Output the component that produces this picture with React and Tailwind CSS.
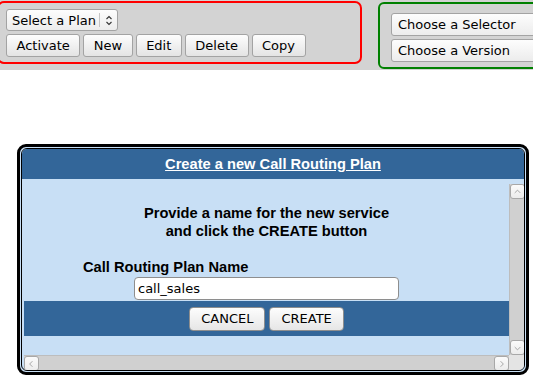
import React from "react";

const sysFont = { fontFamily: '"DejaVu Sans", sans-serif' };
const arialFont = { fontFamily: '"Liberation Sans", Arial, sans-serif' };

const ToolButton = ({ children }) => (
  <button
    className="h-[23px] px-[9.5px] rounded-[3px] border border-[#a3a3a3] bg-gradient-to-b from-[#fdfdfd] to-[#e4e4e4] text-[13px] text-black leading-none"
    style={sysFont}
  >
    {children}
  </button>
);

const UpDown = () => (
  <svg width="8" height="11" viewBox="0 0 8 11" fill="none" stroke="#333" strokeWidth="1.1">
    <path d="M1.5 4 L4 1.5 L6.5 4" />
    <path d="M1.5 7 L4 9.5 L6.5 7" />
  </svg>
);

const PlanSelect = () => (
  <div
    className="flex items-center h-[22px] w-[112px] rounded-[3px] border border-[#a3a3a3] bg-gradient-to-b from-[#fdfdfd] to-[#ececec] text-[13px] text-black"
    style={sysFont}
  >
    <span className="pl-[5px] pr-[3px] leading-none">Select a Plan</span>
    <span className="h-[14px] border-l border-[#c4c4c4]" />
    <span className="flex-1 flex justify-center">
      <UpDown />
    </span>
  </div>
);

const WideSelect = ({ label }) => (
  <div
    className="flex items-center h-[23px] w-[170px] rounded-[3px] border border-[#a3a3a3] bg-gradient-to-b from-[#fdfdfd] to-[#ececec] text-[13px] text-black pl-[6px]"
    style={sysFont}
  >
    {label}
  </div>
);

// little arrow button of the scrollbars
const ScrollBtn = ({ dir }) => {
  const paths = {
    up: "M4 8 L7 5 L10 8",
    down: "M4 6 L7 9 L10 6",
    left: "M8 4 L5 7 L8 10",
    right: "M6 4 L9 7 L6 10",
  };
  return (
    <div className="w-[15px] h-[15px] shrink-0 rounded-[3px] border border-[#a8a8a8] bg-gradient-to-b from-[#fbfbfb] to-[#ececec] flex items-center justify-center">
      <svg width="14" height="14" viewBox="0 0 14 14" fill="none" stroke="#a0a0a0" strokeWidth="1">
        <path d={paths[dir]} />
      </svg>
    </div>
  );
};

const DialogButton = ({ children }) => (
  <button
    className="h-[24px] px-[11px] rounded-[4px] border border-[#8e8e8e] bg-gradient-to-b from-[#fdfdfd] to-[#e6e6e6] text-[13px] text-black leading-none"
    style={sysFont}
  >
    {children}
  </button>
);

export default function App() {
  return (
    <div className="w-[533px] h-[380px] overflow-hidden bg-white">
      <div className="flex items-start h-[70px] bg-[#d3d3d3]">
        <div className="shrink-0 ml-[-3px] mt-px w-[365px] h-[63px] border-2 border-[#ff0000] rounded-[7px] pl-[7px] pt-[6px] flex flex-col gap-[3px]">
          <PlanSelect />
          <div className="flex gap-[3px]">
            <ToolButton>Activate</ToolButton>
            <ToolButton>New</ToolButton>
            <ToolButton>Edit</ToolButton>
            <ToolButton>Delete</ToolButton>
            <ToolButton>Copy</ToolButton>
          </div>
        </div>
        <div className="ml-[16px] mt-[2px] w-[180px] shrink-0 h-[67px] border-2 border-[#008000] rounded-[6px] pl-[11px] pt-[9px] flex flex-col gap-[3px]">
          <WideSelect label="Choose a Selector" />
          <WideSelect label="Choose a Version" />
        </div>
      </div>

      <div className="ml-[17px] mt-[74px] w-[512px] border-[3px] border-black rounded-[9px] bg-[#c8dff5] p-px">
        <div className="border border-black rounded-[6px] overflow-hidden bg-[#c8dff5]">
          <div className="h-[30px] bg-[#336699] flex items-center justify-center">
            <span className="text-white font-bold underline text-[14.67px] leading-none" style={arialFont}>
              Create a new Call Routing Plan
            </span>
          </div>

          <div className="mt-[5px] ml-[2px] w-[500px] h-[186px] flex flex-col">
            <div className="flex h-[171px]">
              <div className="flex-1">
                <div className="pt-[20px] text-black font-bold text-[14.67px] leading-[18px]" style={arialFont}>
                  <p className="text-center">Provide a name for the new service</p>
                  <p className="text-center">and click the CREATE button</p>
                  <p className="mt-[18px] ml-[59px]">Call Routing Plan Name</p>
                </div>
                <div className="ml-[110px] mt-px">
                  <div
                    className="h-[23px] w-[265px] rounded-[4px] border border-[#8e8e8e] bg-white flex items-center pl-[3px] text-[13px] text-black"
                    style={sysFont}
                  >
                    call_sales
                  </div>
                </div>
                <div className="mt-px h-[35px] bg-[#336699] flex items-center justify-center gap-[4px]">
                  <DialogButton>CANCEL</DialogButton>
                  <DialogButton>CREATE</DialogButton>
                </div>
              </div>
              <div className="w-[15px] flex flex-col bg-[#d0d0d0] border-l border-[#bdbdbd]">
                <ScrollBtn dir="up" />
                <div className="flex-1" />
                <ScrollBtn dir="down" />
              </div>
            </div>
            <div className="flex h-[15px]">
              <div className="flex-1 flex bg-[#d0d0d0] border-t border-[#bdbdbd]">
                <ScrollBtn dir="left" />
                <div className="flex-1" />
                <ScrollBtn dir="right" />
              </div>
              <div className="w-[15px] bg-[#e4e4e4]" />
            </div>
          </div>
        </div>
      </div>
    </div>
  );
}
